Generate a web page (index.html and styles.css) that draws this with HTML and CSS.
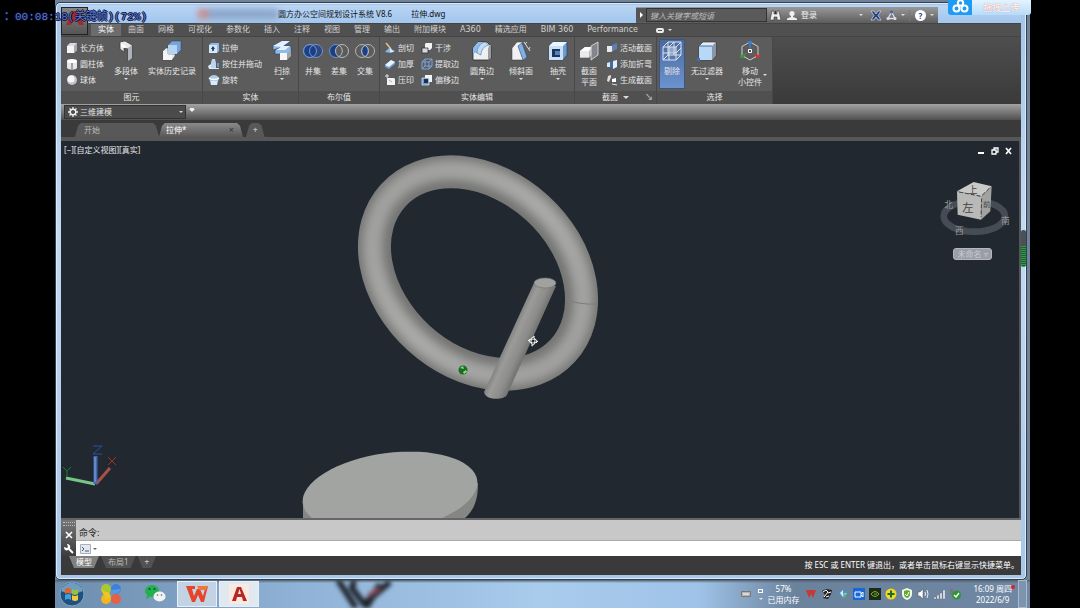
FILE: index.html
```html
<!DOCTYPE html>
<html lang="zh-CN">
<head>
    <meta charset="UTF-8">
    <title>圆方办公空间规划设计系统 V8.6 - 拉伸.dwg</title>
    <link rel="stylesheet" href="styles.css">
</head>
<body>
    <div class="desktop">
        <div class="window">
            <header class="titlebar">
                <button class="app-button" aria-label="应用程序菜单">
                    <svg width="20" height="22" viewBox="0 0 20 22"><path d="M1 17L7 3h5l7 14h-5l-2-4H8l-2 4z" fill="#a32a2c"/><path d="M9 10l1-3 2 3z" fill="#666"/></svg>
                </button>
                <span class="ghost"></span>
                <span class="title">圆方办公空间规划设计系统 V8.6</span>
                <span class="title file">拉伸.dwg</span>
                <div class="search-bar">
                    <button class="search-toggle" aria-label="展开"><i class="tri-right"></i></button>
                    <input class="search-input" type="text" placeholder="键入关键字或短语" aria-label="搜索">
                    <button class="bar-icon binoculars" aria-label="查找">
                        <svg width="11" height="11" viewBox="0 0 11 11"><path d="M2 1h2v3h3V1h2l2 9H7V7H4v3H0z" fill="#eee" stroke="#333" stroke-width=".6"/><path d="M5.500 1v3" stroke="#333"/></svg>
                    </button>
                    <button class="bar-icon login">
                        <svg width="10" height="11" viewBox="0 0 10 11"><circle cx="5" cy="3.500" r="2.600" fill="#eee"/><path d="M0 10V8.500l4-1.500V5h2v2l4 1.500V10z" fill="#eee"/></svg>
                        登录
                    </button>
                    <i class="tri push"></i>
                    <button class="bar-icon" aria-label="Exchange">
                        <svg width="12" height="11" viewBox="0 0 12 11"><path d="M1 1h3l2 3 2-3h3L8 5.500 11 10H8L6 7l-2 3H1l3-4.500z" fill="#26407e" stroke="#c5cfe8" stroke-width=".8"/></svg>
                    </button>
                    <button class="bar-icon" aria-label="连接">
                        <svg width="11" height="11" viewBox="0 0 11 11"><path d="M5.500 2L9 8.500H2z" fill="none" stroke="#dde" stroke-width="1.300"/><circle cx="5.500" cy="2" r="1.500" fill="#3f62a8"/><circle cx="2" cy="8.500" r="1.500" fill="#dde"/><circle cx="9" cy="8.500" r="1.500" fill="#dde"/></svg>
                        <i class="tri"></i>
                    </button>
                    <button class="bar-icon help" aria-label="帮助">
                        <b class="help-mark">?</b>
                        <i class="tri"></i>
                    </button>
                </div>
            </header>

            <nav class="ribbon-tabs">
                <button class="ribbon-tab active">实体</button>
                <button class="ribbon-tab">曲面</button>
                <button class="ribbon-tab">网格</button>
                <button class="ribbon-tab">可视化</button>
                <button class="ribbon-tab">参数化</button>
                <button class="ribbon-tab">插入</button>
                <button class="ribbon-tab">注释</button>
                <button class="ribbon-tab">视图</button>
                <button class="ribbon-tab">管理</button>
                <button class="ribbon-tab">输出</button>
                <button class="ribbon-tab">附加模块</button>
                <button class="ribbon-tab">A360</button>
                <button class="ribbon-tab">精选应用</button>
                <button class="ribbon-tab">BIM 360</button>
                <button class="ribbon-tab">Performance</button>
                <button class="ribbon-tab minimize" aria-label="最小化功能区"><i class="pill"></i><i class="tri"></i></button>
            </nav>

            <div class="ribbon">
                <section class="panel primitives">
                    <div class="panel-body">
                        <div class="small-list">
                            <button class="small"><svg width="12" height="12" viewBox="0 0 12 12"><path d="M1 4l3-3h7v7l-3 3H1z" fill="#d9dce0"/><path d="M1 4h7v7H1z" fill="#f4f4f6"/><path d="M8 4l3-3v7l-3 3z" fill="#a4a8b0"/></svg>长方体</button>
                            <button class="small"><svg width="12" height="12" viewBox="0 0 12 12"><path d="M1 3v7c2 2 8 2 10 0V3z" fill="#e6e7ea"/><ellipse cx="6" cy="3" rx="5" ry="2" fill="#fff"/><path d="M5 5h2v6H5z" fill="#9b9fa8"/></svg>圆柱体</button>
                            <button class="small"><svg width="12" height="12" viewBox="0 0 12 12"><circle cx="6" cy="6" r="5" fill="#c2c4cb"/><circle cx="5" cy="5" r="3.500" fill="#f6f6f8"/></svg>球体</button>
                        </div>
                        <button class="big">
                            <svg width="20" height="22" viewBox="0 0 20 22"><path d="M4 2l5-1 7 4v13l-4 3V9L8 8v4l-4-3z" fill="#e9eaed" stroke="#3b3b3b" stroke-width=".7"/><path d="M12 8l4-3v13l-4 3z" fill="#aeb2ba"/><path d="M5 3l6 4-3 1-3-2z" fill="#fff"/></svg>
                            <span>多段体</span><i class="tri"></i>
                        </button>
                        <button class="big">
                            <svg width="20" height="22" viewBox="0 0 20 22"><path d="M1 11l3-3h9v8l-3 4H1z" fill="#e8e9ec" stroke="#444" stroke-width=".5"/><path d="M1 11h9v9H1z" fill="#f5f5f7"/><path d="M6 5l4-4h9v9l-4 4H6z" fill="#78a3d8" stroke="#29466e" stroke-width=".5"/><path d="M6 5h9v9H6z" fill="#b4d2f1"/></svg>
                            <span>实体历史记录</span>
                        </button>
                    </div>
                    <h2 class="panel-title">图元</h2>
                </section>

                <section class="panel solids">
                    <div class="panel-body">
                        <div class="small-list">
                            <button class="small"><svg width="12" height="12" viewBox="0 0 12 12"><path d="M1 3l2-2h8v8l-2 2H1z" fill="#8db9e4"/><path d="M1 3h8v8H1z" fill="#d5e8fa"/><path d="M5 4l2 3H5.800v2H4.200V7H3z" fill="#17365f"/></svg>拉伸</button>
                            <button class="small"><svg width="12" height="12" viewBox="0 0 12 12"><path d="M3 5l1-4h3l1 4v5H3z" fill="#b9d5f0"/><path d="M0 8l3-2v4h8v1H1z" fill="#dfe9f4"/><path d="M9 5h2v4H9z" fill="#6b93c4"/></svg>按住并拖动</button>
                            <button class="small"><svg width="12" height="12" viewBox="0 0 12 12"><path d="M1 4c2-4 8-4 10 0l-2 7H3z" fill="#a9cdee"/><path d="M1 4c2 2 8 2 10 0" fill="none" stroke="#fff" stroke-width="1.500"/><path d="M3 7h6v4H3z" fill="#dfe9f5"/></svg>旋转</button>
                        </div>
                        <button class="big">
                            <svg width="20" height="22" viewBox="0 0 20 22"><path d="M1 6l9-5h8l-6 5h7v7l-5 4-6-3H3V10l5-2-7 2z" fill="#8fbbe9" stroke="#26456d" stroke-width=".6"/><path d="M1 6l9-5h8l-7 5h7l-5 4H4l5-3z" fill="#e2f0ff"/><path d="M8 13h7v7H8z" fill="#f6f6f7"/><path d="M15 13l4-3v6l-4 4z" fill="#a0a4ac"/></svg>
                            <span>扫掠</span><i class="tri"></i>
                        </button>
                    </div>
                    <h2 class="panel-title">实体</h2>
                </section>

                <section class="panel booleans">
                    <div class="panel-body">
                        <button class="big">
                            <svg width="20" height="22" viewBox="0 0 20 22"><circle cx="7" cy="11" r="6.500" fill="#1d3f86" stroke="#6f94d2"/><circle cx="13" cy="11" r="6.500" fill="#1d3f86" fill-opacity=".7" stroke="#6f94d2"/><circle cx="7" cy="11" r="6.500" fill="none" stroke="#6f94d2"/></svg>
                            <span>并集</span>
                        </button>
                        <button class="big">
                            <svg width="20" height="22" viewBox="0 0 20 22"><circle cx="7" cy="11" r="6.500" fill="#1d3f86" stroke="#6f94d2"/><circle cx="13" cy="11" r="6.500" fill="#5b5b5b" stroke="#bbb"/><path d="M10 5.300a6.500 6.500 0 0 1 0 11.400" fill="none" stroke="#bbb"/></svg>
                            <span>差集</span>
                        </button>
                        <button class="big">
                            <svg width="20" height="22" viewBox="0 0 20 22"><path d="M10 5.300a6.500 6.500 0 0 1 0 11.400a6.500 6.500 0 0 1 0-11.400" fill="#1d3f86" stroke="#6f94d2"/><circle cx="7" cy="11" r="6.500" fill="none" stroke="#b5b5b5"/><circle cx="13" cy="11" r="6.500" fill="none" stroke="#b5b5b5"/></svg>
                            <span>交集</span>
                        </button>
                    </div>
                    <h2 class="panel-title">布尔值</h2>
                </section>

                <section class="panel editing">
                    <div class="panel-body">
                        <div class="small-list">
                            <button class="small"><svg width="12" height="12" viewBox="0 0 12 12"><path d="M1 10l4-4 6 3-4 2z" fill="#8ab8e8"/><path d="M2 1l5 6" stroke="#e0c28c" stroke-width="1.500"/><path d="M6 6l4 4H6z" fill="#dceafa"/></svg>剖切</button>
                            <button class="small"><svg width="12" height="12" viewBox="0 0 12 12"><path d="M1 7l6-5 4 2v2l-6 5-4-2z" fill="#6f9fd6"/><path d="M1 7l6-5 4 2-6 5z" fill="#eaf4ff"/></svg>加厚</button>
                            <button class="small"><svg width="12" height="12" viewBox="0 0 12 12"><path d="M3 4h7l1 1v6H3z" fill="#f3f3f3"/><path d="M1 2h4M3 0v4" stroke="#ddd"/><path d="M5 6l3 2" stroke="#aaa"/></svg>压印</button>
                        </div>
                        <div class="small-list">
                            <button class="small"><svg width="12" height="12" viewBox="0 0 12 12"><path d="M4 2l1-1h6v5l-2 2H4z" fill="#f2f2f4"/><path d="M1 6h6v5H1z" fill="#d5d7dc" stroke="#222" stroke-width=".7"/></svg>干涉</button>
                            <button class="small"><svg width="12" height="12" viewBox="0 0 12 12"><path d="M1 4h7v7H1zM4 1h7v7H4zM1 4l3-3M8 4l3-3M8 11l3-3M1 11l3-3" fill="none" stroke="#7ba5da"/></svg>提取边</button>
                            <button class="small"><svg width="12" height="12" viewBox="0 0 12 12"><path d="M4 1h7v7H4z" fill="#f3f4f6"/><path d="M1 4h7v7H1z" fill="#6e9bd3" stroke="#dce9f7" stroke-width=".7"/><path d="M3 5h4v4H3z" fill="#1f2f4a"/></svg>偏移边</button>
                        </div>
                        <button class="big">
                            <svg width="20" height="22" viewBox="0 0 20 22"><path d="M1 8l5-6h9l4 4v12l-3 2H1z" fill="#eeeff1" stroke="#2b2b2b" stroke-width=".8"/><path d="M1 13V8l5-6h7c-5 1-8 6-8 11z" fill="#8fbdeb"/><path d="M5 13c0-5 3-10 8-11l4 3c-5 1-8 5-8 10z" fill="#c0dcf7" stroke="#3d5c86" stroke-width=".5"/><path d="M17 6l2-1v13l-3 2V9z" fill="#9a9da4"/></svg>
                            <span>圆角边</span><i class="tri"></i>
                        </button>
                        <button class="big">
                            <svg width="20" height="22" viewBox="0 0 20 22"><path d="M1 19V8l5-6h5l5 15-3 3H1z" fill="#f1f1f3" stroke="#383838" stroke-width=".5"/><path d="M7 6l4-3 5 14-4 3z" fill="#7fb0e4" stroke="#29425f" stroke-width=".6"/><path d="M13 2l6 9M14 4l2-2M18 9l1-2" stroke="#ddd" fill="none"/></svg>
                            <span>倾斜面</span><i class="tri"></i>
                        </button>
                        <button class="big">
                            <svg width="20" height="22" viewBox="0 0 20 22"><path d="M1 6l4-4h14v13l-4 5H1z" fill="#6d9ad2" stroke="#263f60" stroke-width=".7"/><path d="M1 6h14v14H1z" fill="#c7dff7"/><path d="M1 6l4-4h14l-4 4z" fill="#ecf6ff"/><path d="M4 9h8v8H4z" fill="#1b3558"/><path d="M7 11h5v4H7z" fill="#5683bd"/></svg>
                            <span>抽壳</span><i class="tri"></i>
                        </button>
                    </div>
                    <h2 class="panel-title">实体编辑</h2>
                </section>

                <section class="panel sections">
                    <div class="panel-body">
                        <button class="big">
                            <svg width="20" height="22" viewBox="0 0 20 22"><path d="M1 11l5-4h7v7l-3 4H1z" fill="#b8bac0"/><path d="M1 11l5-4h7l-3 4z" fill="#fff"/><path d="M1 11h9v6H1z" fill="#e9e9ec"/><path d="M12 6l7-4v13l-7 5z" fill="#8d9098" fill-opacity=".8" stroke="#e6e6e6" stroke-width=".8"/></svg>
                            <span>截面<br>平面</span>
                        </button>
                        <div class="small-list">
                            <button class="small"><svg width="12" height="12" viewBox="0 0 12 12"><path d="M1 4h6l1 4-3 2H1z" fill="#e6ebf2"/><path d="M6 3l5-2v6L6 9z" fill="#5d7fb3"/></svg>活动截面</button>
                            <button class="small"><svg width="12" height="12" viewBox="0 0 12 12"><path d="M1 5l3-1v5H1z" fill="#d9e7f7"/><path d="M4 3l3 1v7L4 9z" fill="#3d6bb0"/><path d="M7 3l4-1v7l-4 2z" fill="#e3effc"/></svg>添加折弯</button>
                            <button class="small"><svg width="12" height="12" viewBox="0 0 12 12"><path d="M1 7l1-5 3-1v2L3 8z" fill="#ddd"/><path d="M6 5l4-1v4H6z" fill="#fff"/><path d="M6 10l5 1" stroke="#ddd"/></svg>生成截面</button>
                        </div>
                    </div>
                    <h2 class="panel-title">截面<i class="tri wide"></i><i class="launcher">↘</i></h2>
                </section>

                <section class="panel selection">
                    <div class="panel-body">
                        <button class="big pressed">
                            <svg width="22" height="22" viewBox="0 0 22 22"><path d="M2 7l5-5h13v13l-5 5H2zM2 7h13v13M15 7l5-5M8 7v13M2 13h13l5-5M8 7l5-5v13M7 2v13L2 20M7 15h13" fill="none" stroke="#dfe6f1"/><path d="M8 7h7v6H8z" fill="#cfd7e5" fill-opacity=".5"/></svg>
                            <span>剔除</span>
                        </button>
                        <button class="big">
                            <svg width="20" height="22" viewBox="0 0 20 22"><path d="M2 6l4-4h13v13l-4 5H2z" fill="#e9ebef" stroke="#2c2c2c" stroke-width=".6"/><path d="M2 6h13v14H2z" fill="#b8d8f8"/><path d="M15 6l4-4v13l-4 5z" fill="#8b97a8"/><path d="M2 6h13" stroke="#3d70b4"/><path d="M0 18h3v3H0z" fill="#3d70b4"/></svg>
                            <span>无过滤器</span><i class="tri"></i>
                        </button>
                        <button class="big gizmo">
                            <svg width="20" height="22" viewBox="0 0 20 22"><path d="M10 2l8 4.500v9L10 20l-8-4.500v-9z" fill="none" stroke="#ccc"/><path d="M10 8V3" stroke="#3d7ed0" stroke-width="1.500"/><path d="M14 14l4 2" stroke="#c23a31" stroke-width="1.500"/><path d="M6 14l-4 2" stroke="#3d9440" stroke-width="1.500"/><path d="M8.500 9.500h3v3h-3z" fill="#444" stroke="#fff"/><path d="M8 1h4v3H8z" fill="#3d7ed0"/><path d="M16 15h4v3h-4z" fill="#c23a31"/><path d="M0 15h4v3H0z" fill="#3d9440"/></svg>
                            <span>移动<br>小控件</span><i class="tri side"></i>
                        </button>
                    </div>
                    <h2 class="panel-title">选择</h2>
                </section>
            </div>

            <div class="workspace-bar">
                <button class="workspace">
                    <svg width="10" height="10" viewBox="0 0 10 10"><circle cx="5" cy="5" r="2.800" fill="none" stroke="#eee" stroke-width="1.500"/><path d="M5 0v2M5 8v2M0 5h2M8 5h2M1.500 1.500l1.300 1.300M7.200 7.200l1.300 1.300M8.500 1.500L7.200 2.800M2.800 7.200L1.500 8.500" stroke="#eee" stroke-width="1.300"/></svg>
                    三维建模<i class="tri push"></i>
                </button>
                <i class="overflow"></i>
            </div>

            <div class="doc-tabs">
                <button class="doc-tab start"><span>开始</span></button>
                <button class="doc-tab current"><span>拉伸*</span><span class="close">×</span></button>
                <button class="doc-tab add" aria-label="新图形"><span>+</span></button>
            </div>

            <main class="viewport">
                <svg class="model" viewBox="0 0 960 377" preserveAspectRatio="xMinYMin slice">
                    <defs>
                        <linearGradient id="ring" x1="0" y1="0" x2="1" y2="0">
                            <stop offset="0" stop-color="#a0a19f"/><stop offset=".5" stop-color="#a9aaa8"/><stop offset="1" stop-color="#a0a19f"/>
                        </linearGradient>
                        <linearGradient id="rod" gradientUnits="userSpaceOnUse" x1="448" y1="192" x2="470" y2="202">
                            <stop offset="0" stop-color="#7c7c7a"/><stop offset=".3" stop-color="#9b9c99"/><stop offset=".7" stop-color="#8c8d8a"/><stop offset="1" stop-color="#70706e"/>
                        </linearGradient>
                        <filter id="soft" x="-20%" y="-20%" width="140%" height="140%"><feGaussianBlur stdDeviation="5"/></filter>
                        <clipPath id="tube"><path clip-rule="evenodd" d="M-131.500 0a131.500 104.500 0 1 0 263 0a131.500 104.500 0 1 0-263 0zM-98.500 0a98.500 71.500 0 1 0 197 0a98.500 71.500 0 1 0-197 0z"/></clipPath>
                    </defs>
                    <g transform="translate(417 132) rotate(42.500)" fill="none">
                        <ellipse rx="115" ry="88" stroke="#747573" stroke-width="33"/>
                        <g clip-path="url(#tube)">
                            <ellipse rx="117" ry="90" stroke="url(#ring)" stroke-width="20" filter="url(#soft)"/>
                        </g>
                    </g>
                    <path d="M504 158q14 6 32 5" fill="none" stroke="#7d7d7b"/>
                    <path d="M473 142L423 251c1 8 19 9 23 3L495 145z" fill="url(#rod)"/>
                    <ellipse cx="484" cy="142" rx="11" ry="5" fill="#a1a29f" stroke="#6f6f6d" stroke-width=".6"/>
                    <circle cx="402" cy="229" r="4.500" fill="#1b6b22"/>
                    <path d="M399 227l3-2 1 3zM402 231l3-2 1 2-3 2z" fill="#7be07f"/>
                    <g stroke="#eee" fill="none"><ellipse cx="472" cy="200" rx="4" ry="2"/><ellipse cx="472" cy="200" rx="2" ry="4"/><path d="M467 200l2-2M477 200l-2 2M472 195l2 1M472 205l-2-1"/></g>
                    <path d="M242 360v17h162c9-8 13-18 13-35z" fill="#858784"/>
                    <ellipse cx="329" cy="351" rx="88" ry="39" transform="rotate(-7.600 329 351)" fill="#a1a4a0"/>
                </svg>
                <span class="view-label">[−][自定义视图][真实]</span>
                <div class="mdi">
                    <button class="mdi-button" aria-label="最小化"><svg width="8" height="8" viewBox="0 0 8 8"><path d="M1 6h6" stroke="#fff" stroke-width="2"/></svg></button>
                    <button class="mdi-button" aria-label="还原"><svg width="8" height="8" viewBox="0 0 8 8"><path d="M1 3h4v4H1zM3 3V1h4v4H5" fill="none" stroke="#fff" stroke-width="1.300"/></svg></button>
                    <button class="mdi-button" aria-label="关闭"><svg width="8" height="8" viewBox="0 0 8 8"><path d="M1 1l5 6M6 1L1 7" stroke="#fff" stroke-width="1.600"/></svg></button>
                </div>
                <div class="view-cube">
                    <svg width="77" height="60" viewBox="50 115 231 180">
                        <ellipse cx="162" cy="230" rx="92" ry="46" fill="none" stroke="#454c55" stroke-width="20"/>
                        <path d="M110 155l50-28 54 13-29 30z" fill="#c9c9c8"/>
                        <path d="M110 155l75 15-3 70-70-15z" fill="#b9b9b8"/>
                        <path d="M185 170l29-30-4 75-28 25z" fill="#a2a2a1"/>
                        <path d="M116 157l66 13 28-27M184 176l-2 56" fill="none" stroke="#444" stroke-width="3" stroke-dasharray="12 6"/>
                        <text x="144" y="160" class="face top">上</text>
                        <text x="126" y="218" class="face">左</text>
                        <text x="188" y="202" class="face side">前</text>
                        <text x="72" y="206" class="compass">北</text>
                        <text x="104" y="284" class="compass">西</text>
                        <text x="242" y="252" class="compass">南</text>
                    </svg>
                    <button class="ucs-name">未命名 ▿</button>
                </div>
                <svg class="ucs" width="56" height="44" viewBox="0 0 56 44">
                    <path d="M5 34l29 6" stroke="#76c787" stroke-width="3"/>
                    <path d="M35 40l14-16" stroke="#a8504c" stroke-width="3"/>
                    <path d="M34.500 40V12" stroke="#4168b4" stroke-width="4"/>
                    <path d="M34 38V13" stroke="#86a6dc"/>
                    <path d="M32 2h9l-9 8h9" fill="none" stroke="#2750a8"/>
                    <path d="M47 13l8 8M55 13l-8 8" stroke="#a0302c"/>
                    <path d="M2 23l4 4 4-4M6 27v5" fill="none" stroke="#1f7a28"/>
                </svg>
            </main>

            <section class="command">
                <div class="command-side">
                    <i class="grip"></i>
                    <button aria-label="关闭"><svg width="8" height="8" viewBox="0 0 8 8"><path d="M1 1l6 6M7 1L1 7" stroke="#fff" stroke-width="1.600"/></svg></button>
                    <button aria-label="自定义"><svg width="10" height="10" viewBox="0 0 10 10"><path d="M4 4l5 5" stroke="#fff" stroke-width="2"/><path d="M3 0l1 3-1 1-3-1c0 3 2 4 4 3l2-2C7 2 5 0 3 0z" fill="#fff"/></svg></button>
                </div>
                <div class="command-main">
                    <div class="history">命令:</div>
                    <label class="prompt">
                        <svg width="11" height="10" viewBox="0 0 11 10"><path d="M.5.5h10v9H.5z" fill="#e3e7ee" stroke="#a9b0bd"/><path d="M2 3l2 2-2 2M5 7h4" fill="none" stroke="#4a5a78"/></svg>
                        <i class="tri dark"></i>
                        <input class="command-input" type="text" aria-label="命令行">
                    </label>
                </div>
            </section>

            <footer class="status">
                <div class="layouts">
                    <button class="layout active">模型</button>
                    <button class="layout">布局1</button>
                    <button class="layout new" aria-label="新布局">+</button>
                </div>
                <span class="status-text">按 ESC 或 ENTER 键退出，或者单击鼠标右键显示快捷菜单。</span>
            </footer>
            <i class="volume"></i>
        </div>

        <div class="taskbar">
            <button class="start-orb" aria-label="开始">
                <svg width="26" height="26" viewBox="0 0 26 26"><circle cx="13" cy="13" r="12" fill="#20507c" stroke="#7fa6c8"/><path d="M2 10a11.500 11.500 0 0 1 22 0q-11 5-22 0z" fill="#6f9cc0"/><path d="M6 8q3-2 6 0v5q-3-2-6 0z" fill="#e6622c"/><path d="M13 8q3 2 6 0v5q-3 2-6 0z" fill="#8fc442"/><path d="M6 14q3-2 6 0v5q-3-2-6 0z" fill="#3f9fe0"/><path d="M13 14q3 2 6 0v5q-3 2-6 0z" fill="#f8c735"/></svg>
            </button>
            <button class="launch clover" aria-label="浏览器">
                <svg width="22" height="22" viewBox="0 0 22 22"><circle cx="6" cy="6" r="5" fill="#a8c932"/><circle cx="16" cy="6" r="5" fill="#3d82d8"/><circle cx="6" cy="16" r="5" fill="#f4b51e"/><circle cx="16" cy="16" r="5" fill="#e75f45"/><path d="M1 6q5 4 8 3l2 5-5 3z" fill="#efc522"/><path d="M21 6q-2 5-8 5l-2-4z" fill="#559ae4"/></svg>
            </button>
            <button class="launch" aria-label="微信">
                <svg width="22" height="20" viewBox="0 0 22 20"><ellipse cx="8" cy="7" rx="7" ry="6" fill="#22b14c"/><path d="M3 11l-1 4 4-2z" fill="#22b14c"/><circle cx="5.500" cy="5" r="1" fill="#145"/><circle cx="10.500" cy="5" r="1" fill="#145"/><ellipse cx="15.500" cy="12.500" rx="6" ry="5" fill="#f1f3f3"/><circle cx="13.500" cy="11" r=".8" fill="#567"/><circle cx="17.500" cy="11" r=".8" fill="#567"/></svg>
            </button>
            <button class="task" aria-label="WPS">
                <svg width="22" height="18" viewBox="0 0 22 18"><path d="M2 1h7v3H6l2 7 3-7h3l3 7 3-10h2l-4 16h-3l-3-7-3 7H6L0 1z" fill="#e5452a"/><path d="M11 1h11l-2 4h-7z" fill="#f0763d"/></svg>
            </button>
            <button class="task lit" aria-label="AutoCAD">
                <svg width="20" height="20" viewBox="0 0 20 20"><path d="M0 0h20v20H0z" fill="#fbe8e2"/><path d="M3 17L8 3h4l6 14h-4l-1-4H8l-1 4zM9 10h3l-1.500-5z" fill="#b5281f" fill-rule="evenodd"/></svg>
            </button>
            <svg class="wallpaper" width="90" height="28" viewBox="0 0 90 28"><path d="M12 0l18 28M28 0l-2 8 12 16L64 2M54 4l-14 24" fill="none" stroke="#1f242b" stroke-width="6"/><path d="M42 16l12-8" stroke="#8c4b58" stroke-width="4"/></svg>
            <div class="tray">
                <svg width="10" height="6" viewBox="0 0 10 6"><path d="M.5.5h9v5h-9z" fill="#b9b0b0" stroke="#777"/><path d="M2 3h6" stroke="#fff"/></svg>
                <div class="tray-more"><i class="restore"></i><i class="tri"></i></div>
                <div class="memory">57%<br>已用内存</div>
                <div class="tray-icons">
                    <svg width="12" height="12" viewBox="0 0 12 12"><path d="M1 2h10L8 10 6 6 4 10z" fill="#c53a32"/></svg>
                    <svg width="12" height="12" viewBox="0 0 12 12"><path d="M1 3l4-2 6 1-1 4-3 5-5-1 2-3z" fill="#222"/><path d="M2 4l3-2 2 2-4 5M7 5l3-1M5 9l3-1" stroke="#fff" fill="none"/></svg>
                    <svg width="12" height="12" viewBox="0 0 12 12"><path d="M1 5l5-4 5 4-5 6z" fill="#4d91c6"/><path d="M3 5l3-3v4l4-1-4 4z" fill="#d5f0ec"/><path d="M6 6l4 1-3 4z" fill="#5daf6d"/></svg>
                    <svg width="12" height="12" viewBox="0 0 12 12"><path d="M0 0h12v12H0z" fill="#1668d8"/><path d="M2 4h6v5H2zM8 6l2-2v5L8 7" fill="none" stroke="#fff"/></svg>
                    <svg width="12" height="12" viewBox="0 0 12 12"><path d="M0 0h12v12H0z" fill="#1c2a16"/><path d="M2 6q4-5 8 0-4 5-8 0zM5 6h3" fill="none" stroke="#76b32a"/></svg>
                    <svg width="12" height="12" viewBox="0 0 12 12"><circle cx="6" cy="6" r="5.500" fill="#f1d91e"/><path d="M6 2.500v7M2.500 6h7" stroke="#1c6b2c" stroke-width="2"/></svg>
                    <svg width="12" height="12" viewBox="0 0 12 12"><path d="M6 0l5 2v4q0 4-5 6-5-2-5-6V2z" fill="#f5f8ee"/><path d="M6 2l3 1v3q0 3-3 4-3-1-3-4V3z" fill="#5fae2b"/><path d="M4 6l2 2 2-4" fill="none" stroke="#fff"/></svg>
                    <svg width="12" height="12" viewBox="0 0 12 12"><path d="M1 4h2l3-3v10L3 8H1z" fill="#fff" stroke="#555" stroke-width=".5"/><path d="M8 4q1 2 0 4M10 2q2 4 0 8" fill="none" stroke="#eee"/></svg>
                    <svg width="12" height="12" viewBox="0 0 12 12"><path d="M1 9h2v2H1zM4 7h2v4H4zM7 5h2v6H7zM10 2h2v9h-2z" fill="#eef2f6" stroke="#667" stroke-width=".4"/></svg>
                    <svg width="12" height="12" viewBox="0 0 12 12"><path d="M1 1h3v6H1z" fill="#777"/><circle cx="7.500" cy="7" r="4.500" fill="#2d963b"/><path d="M5 7l2 2 3-4" fill="none" stroke="#fff" stroke-width="1.300"/></svg>
                </div>
                <div class="clock">16:09 周四<br>2022/6/9<i class="alert"></i></div>
                <button class="show-desktop" aria-label="显示桌面"></button>
            </div>
        </div>

        <button class="upload">
            <span class="upload-icon"><svg width="17" height="14" viewBox="0 0 17 14"><g fill="none" stroke="#fff" stroke-width="2"><circle cx="8.500" cy="3" r="2.700"/><circle cx="4.500" cy="8.500" r="3"/><circle cx="12.500" cy="8.500" r="3"/></g></svg></span>
            <span class="upload-text">拖拽上传</span>
        </button>
    </div>
    <div class="osd">：00:08:18(关键帧)(72%)</div>
</body>
</html>
```

FILE: styles.css
```css
* {
    box-sizing: border-box;
}
body {
    margin: 0;
    padding: 0 50px 0 55px;
    height: 100vh;
    overflow: hidden;
    background: #000;
    color: #e6e6e6;
    font-family: "Noto Sans", "Noto Sans CJK SC", sans-serif;
    font-size: 8px;
    line-height: 12px;
    position: relative;
}
button, input {
    font: inherit;
    color: inherit;
    background: none;
    border: 0;
    padding: 0;
    margin: 0;
}
button {
    white-space: nowrap;
}
svg {
    display: block;
    flex: none;
}
.desktop {
    height: 100%;
    display: flex;
    flex-direction: column;
    position: relative;
    background: #6f8297;
    padding-top: 2px;
}

/* small arrows */
.tri {
    display: block;
    width: 0;
    height: 0;
    border: 2px solid transparent;
    border-top: 2px solid #ddd;
    border-bottom: 0;
}
.tri.wide {
    display: inline-block;
    border-width: 3px 3px 0;
    margin-left: 5px;
    vertical-align: 1px;
}
.tri.dark {
    border-top-color: #666;
}
.tri-right {
    display: block;
    border: 3px solid transparent;
    border-left: 3px solid #fff;
    border-right: 0;
}
.push {
    margin-left: auto;
}

/* window */
.window {
    flex: 1;
    min-height: 0;
    display: flex;
    flex-direction: column;
    position: relative;
    margin-right: 3px;
    padding: 2px 5px 4px;
    border: 1px solid #33414f;
    border-radius: 5px;
    background: linear-gradient(#a5c4e8, #c3daf3 40%, #a9c6e8);
    box-shadow: inset 0 0 0 1px #dcebfa;
}
.titlebar {
    height: 18px;
    display: flex;
    align-items: center;
    position: relative;
    background: linear-gradient(#b9d5f3, #a2c6ee);
    color: #111;
}
.app-button {
    position: absolute;
    left: 0;
    top: 2px;
    width: 27px;
    height: 28px;
    display: grid;
    place-items: start center;
    background: linear-gradient(#858585, #555);
    border: 1px solid #222;
    z-index: 2;
}
.ghost {
    width: 80px;
    height: 10px;
    margin-left: 137px;
    border-left: 10px solid #c98c8c;
    background: #8ba6c8;
    filter: blur(3px);
}
.title {
    white-space: nowrap;
}
.file {
    margin-left: 19px;
}
.search-bar {
    margin-left: auto;
    margin-right: 83px;
    margin-top: 2px;
    width: 302px;
    height: 16px;
    display: flex;
    align-items: center;
    background: linear-gradient(#999, #5c5c5c);
    color: #eee;
}
.search-toggle {
    width: 10px;
    height: 14px;
    display: grid;
    place-items: center;
    background: #555;
}
.search-input {
    width: 121px;
    height: 14px;
    padding: 0 3px;
    border: 1px solid #333;
    background: #5a5a5a;
}
.search-input::placeholder {
    color: #bbb;
    font-style: italic;
    opacity: 1;
}
.bar-icon {
    display: flex;
    align-items: center;
    gap: 4px;
    margin-right: 4px;
}
.binoculars {
    margin: 0 6px 0 3px;
}
.search-bar > .tri {
    margin-right: 7px;
}
.help {
    border-left: 1px solid #777;
    padding-left: 5px;
}
.help-mark {
    width: 11px;
    height: 11px;
    border-radius: 50%;
    background: #fff;
    color: #234a94;
    line-height: 11px;
}

/* ribbon */
.ribbon-tabs {
    height: 14px;
    display: flex;
    padding-left: 30px;
    background: #505050;
    border-bottom: 1px solid #444;
    border-top: 1px solid #444;
    font-family: "DejaVu Sans", "Noto Sans CJK SC", sans-serif;
    color: #d0d0d0;
}
.ribbon-tab {
    padding: 0 7px;
    line-height: 12px;
}
.ribbon-tab.active {
    background: #6c6c6c;
    color: #fff;
}
.minimize {
    display: flex;
    align-items: center;
    gap: 4px;
    margin-left: 4px;
}
.pill {
    width: 8px;
    height: 5px;
    border: 2px solid #eee;
    border-radius: 2px;
}
.ribbon {
    height: 67px;
    display: flex;
    background: linear-gradient(#4e4e4e, #3a3a3a);
}
.panel {
    flex: none;
    display: flex;
    flex-direction: column;
    border-right: 1px solid #484848;
    background: #5c5c5c;
}
.panel-body {
    flex: 1;
    display: flex;
    gap: 10px;
    padding: 0 5px;
}
.panel-title {
    margin: 0;
    height: 13px;
    line-height: 12px;
    font-size: 8px;
    font-weight: 400;
    text-align: center;
    background: #505050;
    position: relative;
}
.primitives { width: 142px; }
.solids { width: 96px; }
.booleans { width: 81px; }
.editing { width: 195px; }
.sections { width: 82px; }
.selection { width: 116px; }
.booleans .panel-body {
    padding: 0 4px;
    gap: 6px;
}
.editing .panel-body {
    padding: 0 4px;
    gap: 7px;
}
.editing .big {
    margin-left: 4px;
}
.editing .big + .big {
    margin-left: 8px;
}
.sections .panel-body {
    gap: 7px;
    padding: 0 4px;
}
.selection .panel-body {
    gap: 7px;
    padding: 0 3px;
}
.small-list {
    padding-top: 3px;
}
.small {
    height: 16px;
    display: flex;
    align-items: center;
    gap: 2px;
}
.big {
    display: flex;
    flex-direction: column;
    align-items: center;
    height: 48px;
    margin-top: 3px;
    position: relative;
}
.big span {
    margin-top: 3px;
    line-height: 11px;
}
.big .tri {
    margin-top: 2px;
}
.pressed {
    width: 24px;
    background: linear-gradient(#4a6a9e, #6b93cf);
    box-shadow: 0 0 0 1px #3c5680;
}
.gizmo {
    margin-left: 8px;
}
.big .side {
    position: absolute;
    right: -5px;
    bottom: 12px;
}
.launcher {
    position: absolute;
    right: 3px;
    font-style: normal;
}

/* workspace and document tabs */
.workspace-bar {
    height: 16px;
    display: flex;
    align-items: center;
    background: linear-gradient(#a2a2a2, #505050);
}
.workspace {
    width: 122px;
    height: 14px;
    display: flex;
    align-items: center;
    gap: 2px;
    margin-left: 3px;
    padding: 0 2px 0 3px;
    background: #4b4b4b;
    border: 1px solid #333;
}
.overflow {
    margin-left: 3px;
    height: 6px;
    border: 3px solid transparent;
    border-top: 3px solid #eee;
    border-bottom: 0;
    box-shadow: 0 -2px 0 -1px #eee;
}
.doc-tabs {
    height: 21px;
    display: flex;
    align-items: flex-end;
    padding-left: 14px;
    background: #3a3a3a;
    border-bottom: 4px solid #575757;
}
.doc-tab {
    height: 14px;
    display: flex;
    justify-content: space-between;
    padding: 0 9px;
    line-height: 14px;
    color: #bbb;
    background: #585858;
    clip-path: polygon(0 100%, 3px 20%, 6px 0, calc(100% - 6px) 0, calc(100% - 3px) 20%, 100% 100%);
}
.start {
    width: 84px;
}
.current {
    width: 84px;
    padding: 0 9px 0 7px;
    color: #fff;
    background: linear-gradient(#8a8a8a, #585858);
}
.close {
    color: #333;
    font-size: 9px;
}
.add {
    margin-left: 3px;
    padding: 0 7px;
    font-weight: 700;
}

/* drawing area */
.viewport {
    flex: 1;
    min-height: 0;
    position: relative;
    background: #212830;
    border-right: 2px solid #555;
}
.model {
    position: absolute;
    width: 100%;
    height: 100%;
}
.view-label {
    position: absolute;
    left: 3px;
    top: 3px;
}
.mdi {
    position: absolute;
    right: 6px;
    top: 6px;
    display: flex;
    gap: 6px;
}
.view-cube {
    position: absolute;
    right: 5px;
    top: 37px;
    display: flex;
    flex-direction: column;
    align-items: center;
    gap: 10px;
}
.face {
    font-size: 34px;
    fill: #444;
}
.face.top {
    font-size: 28px;
}
.face.side {
    font-size: 22px;
}
.compass {
    font-size: 26px;
    fill: #999;
}
.ucs-name {
    width: 39px;
    height: 12px;
    margin-right: 6px;
    line-height: 10px;
    border: 1px solid #b4b7c0;
    border-radius: 3px;
    background: #9a9ea9;
    color: #c9ccd4;
}
.ucs {
    position: absolute;
    left: 0;
    bottom: 30px;
}

/* command line */
.command {
    height: 38px;
    display: flex;
    border-top: 2px solid #666;
}
.command-side {
    width: 15px;
    display: flex;
    flex-direction: column;
    align-items: center;
    gap: 5px;
    padding: 2px 0;
    background: linear-gradient(#777, #3c3c3c);
}
.grip {
    width: 12px;
    height: 4px;
    border-top: 1px dotted #bbb;
    border-bottom: 1px dotted #bbb;
}
.command-main {
    flex: 1;
    display: flex;
    flex-direction: column;
}
.history {
    height: 21px;
    padding: 7px 3px 0;
    background: #c8c8c8;
    border-bottom: 1px solid #aaa;
    color: #222;
    font-size: 9px;
}
.prompt {
    flex: 1;
    display: flex;
    align-items: center;
    gap: 2px;
    padding-left: 4px;
    background: #fff;
    color: #222;
}
.command-input {
    flex: 1;
    outline: none;
}
.status {
    height: 19px;
    display: flex;
    justify-content: space-between;
    background: #3a3a3a;
}
.layouts {
    display: flex;
    gap: 2px;
    padding-left: 8px;
}
.layout {
    height: 12px;
    padding: 0 7px;
    color: #bbb;
    background: #525252;
    clip-path: polygon(0 0, 100% 0, calc(100% - 5px) 100%, 5px 100%);
}
.layout.active {
    color: #fff;
    background: #808080;
}
.layout.new {
    font-weight: 700;
}
.status-text {
    padding-right: 2px;
    line-height: 18px;
    color: #fff;
}
.volume {
    position: absolute;
    right: 0;
    top: 227px;
    width: 5px;
    height: 37px;
    border-radius: 2px;
    border-top: 16px solid #4a5058;
    background: repeating-linear-gradient(#2f9c4c 0 1px, #1d5f30 1px 2px);
}

/* taskbar */
.taskbar {
    height: 28px;
    display: flex;
    align-items: center;
    padding-left: 4px;
    background: linear-gradient(#516070, transparent 3px), linear-gradient(90deg, #6d8cac, #8fb2d6 25%, #a9cbec 50%, #9fc3e8 66%, #6a829c 76%, #6f87a2);
    overflow: hidden;
}
.launch {
    margin-left: 22px;
}
.clover {
    margin-left: 15px;
}
.task {
    width: 40px;
    height: 26px;
    display: grid;
    place-items: center;
    margin-left: 11px;
    border: 1px solid #e6f0fa;
    background: #c3d3e4;
}
.task.lit {
    margin-left: 2px;
    background: #e0e8f0;
}
.wallpaper {
    margin-left: 67px;
    filter: blur(2px);
}
.tray {
    height: 28px;
    display: flex;
    align-items: center;
    margin-left: auto;
    color: #fff;
}
.tray-more {
    display: grid;
    gap: 5px;
    justify-items: center;
    margin: 0 8px 0 7px;
}
.restore {
    width: 5px;
    height: 4px;
    border: 1px solid #fff;
}
.memory, .clock {
    text-align: center;
    line-height: 11px;
    white-space: nowrap;
}
.memory {
    margin-left: -4px;
}
.clock {
    position: relative;
}
.alert {
    position: absolute;
    right: -3px;
    top: 2px;
    width: 4px;
    height: 4px;
    border-radius: 50%;
    background: #e02020;
}
.tray-icons {
    display: flex;
    gap: 4px;
    margin: 0 12px 0 6px;
}
.show-desktop {
    width: 9px;
    height: 28px;
    margin: 0 3px 0 6px;
    border: 1px solid #a8bbcf;
    background: #7e94ad;
}

/* floating pieces */
.upload {
    position: absolute;
    right: -1px;
    top: 0;
    width: 83px;
    height: 15px;
    display: flex;
    align-items: center;
    border-radius: 0 0 3px 3px;
    overflow: hidden;
    background: linear-gradient(#e4f4ff, #b5dcfa);
}
.upload-icon {
    width: 24px;
    height: 15px;
    display: grid;
    place-items: start center;
    background: #1e9bf5;
}
.upload-text {
    flex: 1;
    font-size: 9px;
    line-height: 10px;
    color: #fff;
    text-shadow: 0 0 1px #d66;
}
.osd {
    position: absolute;
    left: 4px;
    top: 10px;
    font: 11px/14px "Liberation Mono", "Noto Sans CJK SC", monospace;
    color: #5b78d8;
    text-shadow: 1px 0 #0a1030, -1px 0 #0a1030, 0 1px #0a1030, 0 -1px #0a1030;
    white-space: nowrap;
    z-index: 5;
}
```
